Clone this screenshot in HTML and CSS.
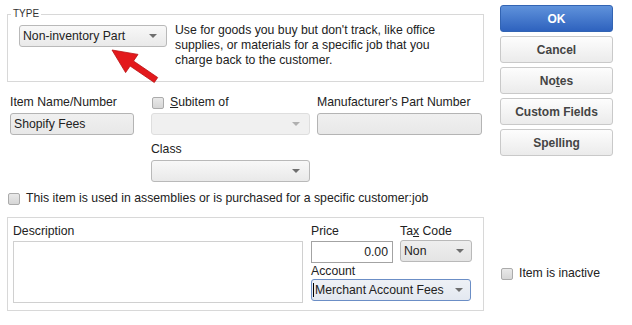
FILE: index.html
```html
<!DOCTYPE html>
<html lang="en">
<head>
    <meta charset="UTF-8">
    <title>Edit Item</title>
    <link rel="stylesheet" href="styles.css">
</head>
<body>

<div class="window">
    <div class="main">
        <fieldset class="type-box">
            <legend>TYPE</legend>
            <div class="type-row">
                <div class="select type-select"><span>Non-inventory Part</span><i class="caret"></i></div>
                <p class="type-note">Use for goods you buy but don't track, like office<br>supplies, or materials for a specific job that you<br>charge back to the customer.</p>
            </div>
        </fieldset>

        <div class="fields">
            <div class="field">
                <label>Item Name/Number</label>
                <div class="input filled name-input">Shopify Fees</div>
            </div>
            <div class="field">
                <label class="check"><span class="box"></span><span><u>S</u>ubitem of</span></label>
                <div class="select disabled wide"><span></span><i class="caret"></i></div>
            </div>
            <div class="field">
                <label>Manufacturer's Part Number</label>
                <div class="input filled part-input"></div>
            </div>
            <div class="field class-field">
                <label>Class</label>
                <div class="select wide"><span></span><i class="caret"></i></div>
            </div>
        </div>

        <label class="check assembly"><span class="box"></span><span>This item is used in assemblies or is purchased for a specific customer:job</span></label>

        <fieldset class="sales-box">
            <div class="desc">
                <label>Description</label>
                <div class="textarea"></div>
            </div>
            <div class="pricing">
                <div class="field">
                    <label>Price</label>
                    <div class="input price-input">0.00</div>
                </div>
                <div class="field">
                    <label>Ta<u>x</u> Code</label>
                    <div class="select tax-select"><span>Non</span><i class="caret"></i></div>
                </div>
                <div class="field account-field">
                    <label>Account</label>
                    <div class="select focused"><span><b class="cursor"></b>Merchant Account Fees</span><i class="caret"></i></div>
                </div>
            </div>
        </fieldset>
    </div>

    <div class="side">
        <button class="btn primary">OK</button>
        <button class="btn">Cancel</button>
        <button class="btn">No<u>t</u>es</button>
        <button class="btn">Custom Fields</button>
        <button class="btn">Spellin<u>g</u></button>
        <label class="check inactive"><span class="box"></span><span>Item is inactive</span></label>
    </div>

    <!-- red pointer drawn over the type box -->
    <svg class="pointer" width="60" height="45" viewBox="0 0 60 45">
        <polygon points="7,5 33,9.4 28.5,16 52.7,32.5 49.3,37.5 25.1,21 20.6,27.6" fill="#e3191c" stroke="#b80f12" stroke-width="0.8" stroke-linejoin="round"/>
    </svg>
</div>

</body>
</html>
```

FILE: styles.css
```css
* {
    box-sizing: border-box;
    margin: 0;
    padding: 0;
}

body {
    font-family: "Liberation Sans", Arial, sans-serif;
    font-size: 12.25px;
    color: #222;
    background-color: #fff;
}

u {
    text-decoration: underline;
}

.window {
    position: relative;
    display: flex;
    align-items: flex-start;
    width: 632px;
    height: 325px;
}

.main {
    width: 477px;
    margin: 8px 0 0 7px;
}

label {
    display: block;
    line-height: 15px;
    white-space: nowrap;
}

/* type box */

.type-box {
    border: 1px solid #d8d8d8;
    padding: 5px 10px 13px 11px;
}

.type-box legend {
    font-size: 10px;
    line-height: 12px;
    padding: 0 2px;
    margin-left: -8px;
    color: #333;
}

.type-row {
    display: flex;
    align-items: flex-start;
}

.type-note {
    margin: -2px 0 0 8px;
    line-height: 15px;
    white-space: nowrap;
}

/* inputs and drop-downs */

.select {
    display: flex;
    align-items: center;
    justify-content: space-between;
    height: 22px;
    padding: 0 9px 0 3px;
    border: 1px solid #b9b9b9;
    border-radius: 3px;
    background: linear-gradient(#f8f8f8, #e9e9e9);
    white-space: nowrap;
}

.caret {
    width: 0;
    height: 0;
    border-left: 4px solid transparent;
    border-right: 4px solid transparent;
    border-top: 4px solid #6e6e6e;
}

.type-select {
    width: 148px;
}

.select.disabled {
    border-color: #dedede;
    background: #f0f0f0;
}

.select.disabled .caret {
    border-top-color: #b0b0b0;
}

.wide {
    width: 159px;
}

.input {
    height: 22px;
    line-height: 20px;
    padding: 0 3px;
    border: 1px solid #b4b4b4;
    border-radius: 3px;
    white-space: nowrap;
}

.input.filled {
    background: linear-gradient(#f0f0f0, #e8e8e8);
}

.name-input {
    width: 124px;
}

.part-input {
    width: 165px;
    background: #eeeeee;
}

/* middle fields */

.fields {
    display: grid;
    grid-template-columns: 141px 166px 165px;
    row-gap: 7px;
    margin: 13px 0 0 3px;
}

.fields .field label {
    margin-bottom: 3px;
}

.class-field {
    grid-column: 2;
}

.check {
    display: flex;
    align-items: center;
    gap: 6px;
}

.check .box {
    width: 12px;
    height: 12px;
    border: 1px solid #ababab;
    border-radius: 2px;
    background: linear-gradient(#e9e9e9, #d6d6d6);
}

.fields .check {
    margin-left: 1px;
}

.assembly {
    margin: 9px 0 0 1px;
}

/* description and price */

.sales-box {
    display: flex;
    align-items: flex-start;
    margin-top: 11px;
    border: 1px solid #d8d8d8;
    padding: 6px 10px 7px 5px;
}

.desc label {
    margin-bottom: 2px;
}

.textarea {
    width: 290px;
    height: 62px;
    border: 1px solid #d0d0d0;
    background: #fff;
}

.pricing {
    display: grid;
    grid-template-columns: 82px 72px;
    column-gap: 7px;
    margin-left: 8px;
}

.pricing label {
    margin-bottom: 2px;
}

.price-input {
    width: 82px;
    border-color: #a3a3a3;
    border-radius: 0;
    text-align: right;
    padding-right: 4px;
}

.tax-select {
    width: 72px;
    margin-top: -1px;
    padding-right: 7px;
    background: linear-gradient(#eeeeee, #e4e4e4);
}

.account-field {
    grid-column: 1 / 3;
    margin-top: 1px;
}

.account-field label {
    margin-bottom: 0;
}

.select.focused {
    width: 160px;
    padding-left: 1px;
    padding-right: 7px;
    border-color: #6b8ec6;
    background: linear-gradient(#eef1f6, #e3e8f0);
}

.cursor {
    display: inline-block;
    width: 1px;
    height: 14px;
    margin-right: 1px;
    vertical-align: -3px;
    background: #000;
}

/* buttons */

.side {
    display: flex;
    flex-direction: column;
    width: 113px;
    margin: 5px 0 0 16px;
}

.btn {
    height: 27px;
    margin-bottom: 4px;
    border: 1px solid #c9c9c9;
    border-radius: 3px;
    background: linear-gradient(#fdfdfd, #ebebeb);
    color: #444;
    font-family: inherit;
    font-size: 12px;
    font-weight: bold;
    cursor: pointer;
}

.btn.primary {
    border-color: #3264b3;
    background: linear-gradient(#5f92db, #2e62be);
    color: #fff;
}

.inactive {
    margin: 106px 0 0 1px;
}

.pointer {
    position: absolute;
    left: 105px;
    top: 45px;
}
```
